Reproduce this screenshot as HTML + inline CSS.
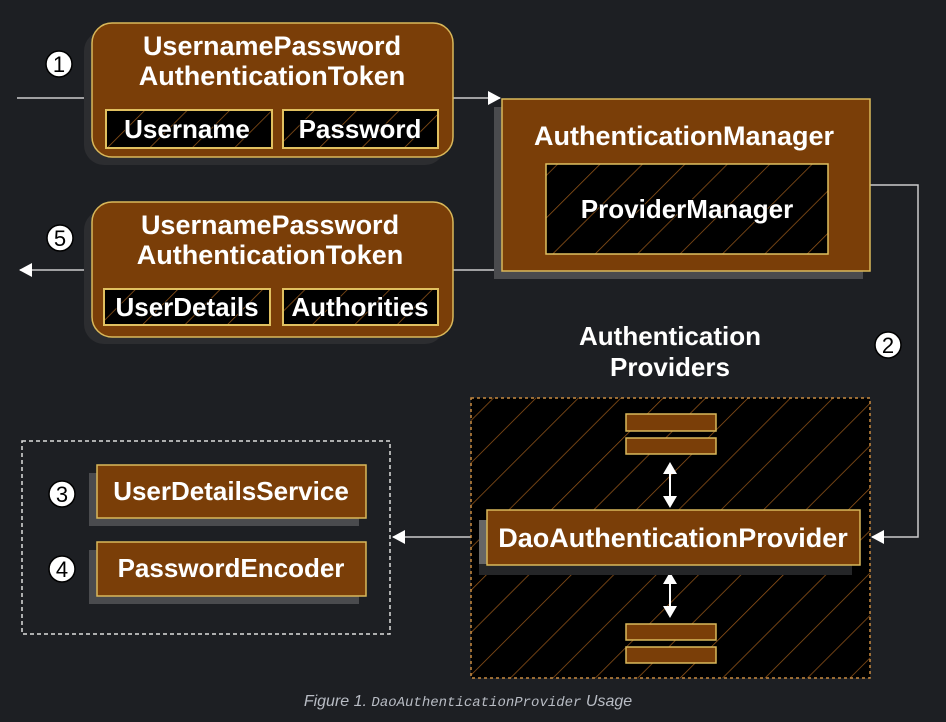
<!DOCTYPE html>
<html><head><meta charset="utf-8"><style>
html,body{margin:0;padding:0;background:#1d1f23;}
svg{display:block}
text{font-family:"Liberation Sans",sans-serif;font-weight:bold;fill:#fff;}
.t{font-size:26px;paint-order:stroke;stroke:#000;stroke-width:1.5px;}
.n{font-size:22px;fill:#000;font-weight:normal;}
.c{font-weight:normal;font-style:italic;font-size:16px;fill:#b8bcc4;}
</style></head><body>
<svg width="946" height="722" viewBox="0 0 946 722" xmlns="http://www.w3.org/2000/svg">
<defs>
<pattern id="h" patternUnits="userSpaceOnUse" width="30" height="30" patternTransform="rotate(45)">
<rect width="30" height="30" fill="#000"/>
<line x1="0" y1="0" x2="0" y2="30" stroke="#94561a" stroke-width="1.5"/>
</pattern>
<marker id="a2" markerWidth="14" markerHeight="14" refX="12" refY="7" orient="auto" markerUnits="userSpaceOnUse"><path d="M0,0 L13,7 L0,14 Z" fill="#fff"/></marker>
</defs>
<rect width="946" height="722" fill="#1d1f23"/>

<line x1="17" y1="98" x2="92" y2="98" stroke="#ccc" stroke-width="1.5"/>
<line x1="453" y1="98" x2="500" y2="98" stroke="#ccc" stroke-width="1.5" marker-end="url(#a2)"/>
<line x1="500" y1="270" x2="20" y2="270" stroke="#ccc" stroke-width="1.5" marker-end="url(#a2)"/>
<polyline points="870,185 918,185 918,537 872,537" fill="none" stroke="#ccc" stroke-width="1.5" marker-end="url(#a2)"/>
<line x1="471" y1="537" x2="393" y2="537" stroke="#ccc" stroke-width="1.5" marker-end="url(#a2)"/>

<rect x="84" y="31" width="361" height="134" rx="20" fill="#2c2d30"/>
<rect x="92" y="23" width="361" height="134" rx="20" fill="#7a3e08" stroke="#d9b85a" stroke-width="1.5"/>
<text x="272" y="55" text-anchor="middle" font-size="27">UsernamePassword</text>
<text x="272" y="85" text-anchor="middle" font-size="27">AuthenticationToken</text>
<rect x="106" y="110" width="166" height="38" fill="url(#h)" stroke="#e0c060" stroke-width="2"/>
<rect x="283" y="110" width="155" height="38" fill="url(#h)" stroke="#e0c060" stroke-width="2"/>
<text class="t" x="187" y="138" text-anchor="middle">Username</text>
<text class="t" x="360" y="138" text-anchor="middle">Password</text>

<rect x="84" y="210" width="361" height="134" rx="20" fill="#2c2d30"/>
<rect x="92" y="202" width="361" height="135" rx="20" fill="#7a3e08" stroke="#d9b85a" stroke-width="1.5"/>
<text x="270" y="234" text-anchor="middle" font-size="27">UsernamePassword</text>
<text x="270" y="264" text-anchor="middle" font-size="27">AuthenticationToken</text>
<rect x="104" y="289" width="166" height="36" fill="url(#h)" stroke="#e0c060" stroke-width="2"/>
<rect x="283" y="289" width="155" height="36" fill="url(#h)" stroke="#e0c060" stroke-width="2"/>
<text class="t" x="187" y="316" text-anchor="middle">UserDetails</text>
<text class="t" x="360" y="316" text-anchor="middle">Authorities</text>

<rect x="494" y="107" width="369" height="172" fill="#4a4b4e"/>
<rect x="502" y="99" width="368" height="172" fill="#7a3e08" stroke="#d9b85a" stroke-width="1.5"/>
<text x="684" y="145" text-anchor="middle" font-size="27">AuthenticationManager</text>
<rect x="546" y="164" width="282" height="90" fill="url(#h)" stroke="#e0c060" stroke-width="1.5"/>
<text class="t" x="687" y="218" text-anchor="middle">ProviderManager</text>

<text x="670" y="345" text-anchor="middle" font-size="26">Authentication</text>
<text x="670" y="376" text-anchor="middle" font-size="26">Providers</text>

<rect x="471" y="398" width="399" height="280" fill="url(#h)" stroke="#c88a40" stroke-width="1.5" stroke-dasharray="3,3"/>
<rect x="626" y="414" width="90" height="17" fill="#7a3e08" stroke="#d9b85a" stroke-width="1.5"/>
<rect x="626" y="438" width="90" height="16" fill="#7a3e08" stroke="#d9b85a" stroke-width="1.5"/>
<rect x="626" y="624" width="90" height="16" fill="#7a3e08" stroke="#d9b85a" stroke-width="1.5"/>
<rect x="626" y="647" width="90" height="16" fill="#7a3e08" stroke="#d9b85a" stroke-width="1.5"/>
<line x1="670" y1="470" x2="670" y2="500" stroke="#fff" stroke-width="2"/>
<path d="M663,474 L670,462 L677,474 Z M663,496 L670,508 L677,496 Z" fill="#fff"/>
<line x1="670" y1="580" x2="670" y2="610" stroke="#fff" stroke-width="2"/>
<path d="M663,584 L670,572 L677,584 Z M663,606 L670,618 L677,606 Z" fill="#fff"/>
<rect x="479" y="520" width="373" height="55" fill="#252628"/>
<rect x="479" y="520" width="368" height="44" fill="#666"/>
<rect x="487" y="510" width="373" height="55" fill="#7a3e08" stroke="#d9b85a" stroke-width="1.5"/>
<text x="673" y="547" text-anchor="middle" font-size="27">DaoAuthenticationProvider</text>

<rect x="22" y="441" width="368" height="193" fill="none" stroke="#ddd" stroke-width="1.5" stroke-dasharray="4,3"/>
<rect x="89" y="473" width="270" height="53" fill="#4a4b4e"/>
<rect x="97" y="465" width="269" height="53" fill="#7a3e08" stroke="#d9b85a" stroke-width="1.5"/>
<text x="231" y="500" text-anchor="middle" font-size="26">UserDetailsService</text>
<rect x="89" y="550" width="270" height="54" fill="#4a4b4e"/>
<rect x="97" y="542" width="269" height="54" fill="#7a3e08" stroke="#d9b85a" stroke-width="1.5"/>
<text x="231" y="577" text-anchor="middle" font-size="26">PasswordEncoder</text>

<g stroke="#000" stroke-width="1.5" fill="#fff">
<circle cx="59" cy="64" r="13"/><circle cx="60" cy="238" r="13"/><circle cx="888" cy="345" r="13"/>
<circle cx="62" cy="494" r="13"/><circle cx="62" cy="569" r="13"/>
</g>
<text class="n" x="59" y="72" text-anchor="middle">1</text>
<text class="n" x="60" y="246" text-anchor="middle">5</text>
<text class="n" x="888" y="353" text-anchor="middle">2</text>
<text class="n" x="62" y="502" text-anchor="middle">3</text>
<text class="n" x="62" y="577" text-anchor="middle">4</text>

<text class="c" x="468" y="706" text-anchor="middle">Figure 1. <tspan font-family="Liberation Mono" font-size="14">DaoAuthenticationProvider</tspan> Usage</text>
</svg>
</body></html>
